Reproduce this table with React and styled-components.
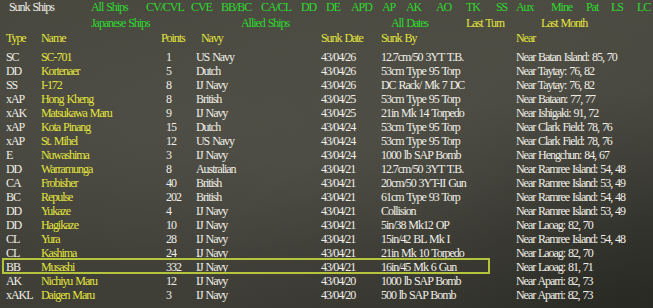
import React from "react";
import styled, { createGlobalStyle } from "styled-components";

const GlobalStyle = createGlobalStyle`
  html, body {
    margin: 0;
    padding: 0;
    background: #42423b;
  }
`;

const Screen = styled.div`
  width: 653px;
  height: 308px;
  overflow: hidden;
  position: relative;
  font-family: "Liberation Serif", "Times New Roman", serif;
  font-size: 12px;
  letter-spacing: -1.05px;
  word-spacing: 1px;
  line-height: 14px;
  color: #f0eee6;
  background:
    radial-gradient(ellipse at 30% 40%, rgba(95, 95, 85, 0.35), transparent 55%),
    radial-gradient(ellipse at 75% 20%, rgba(90, 90, 80, 0.3), transparent 50%),
    radial-gradient(ellipse at 60% 70%, rgba(85, 85, 75, 0.25), transparent 45%),
    radial-gradient(ellipse at 100% 100%, rgba(20, 20, 16, 0.5), transparent 50%),
    linear-gradient(180deg, #48483f 0%, #44443d 60%, #3e3e37 100%);
`;

const FilterRow = styled.div`
  display: flex;
  height: 14px;
  margin-top: ${(p) => p.$top || 0}px;
  white-space: nowrap;
`;

const FilterItem = styled.span`
  flex: 0 0 ${(p) => p.$w}px;
  color: ${(p) => (p.$tone === "yellow" ? "#e4e43c" : p.$tone === "white" ? "#f0eee6" : "#2fd82f")};
`;

const Table = styled.div`
  margin-top: 1px;
  padding-left: 6px;
`;

const Row = styled.div`
  display: grid;
  grid-template-columns: 35px 120px 35px 125px 60px 135px 1fr;
  height: 14px;
  position: relative;
  white-space: nowrap;
  margin-bottom: ${(p) => p.$gap || 0}px;

  ${(p) =>
    p.$selected &&
    `
    &::after {
      content: "";
      position: absolute;
      left: -4px;
      top: -2px;
      width: 484px;
      height: 12px;
      border: 2px solid #b4c43c;
    }
  `}
`;

const Cell = styled.span`
  padding-left: ${(p) => p.$shift || 0}px;
  color: ${(p) => (p.$yellow ? "#e4e43c" : "#f0eee6")};
`;

const topFilters = [
  ["Sunk Ships", 82, "white"],
  ["All Ships", 55],
  ["CV/CVL", 45],
  ["CVE", 30],
  ["BB/BC", 40],
  ["CA/CL", 40],
  ["DD", 25],
  ["DE", 25],
  ["APD", 31],
  ["AP", 24],
  ["AK", 30],
  ["AO", 30],
  ["TK", 30],
  ["SS", 20],
  ["Aux", 35],
  ["Mine", 35],
  ["Pat", 25],
  ["LS", 26],
  ["LC", 16],
];

const secondFilters = [
  ["", 91],
  ["Japanese Ships", 150],
  ["Allied Ships", 150],
  ["All Dates", 75],
  ["Last Turn", 75, "yellow"],
  ["Last Month", 80, "yellow"],
];

const ships = [
  ["SC", "SC-701", "1", "US Navy", "43/04/26", "12.7cm/50 3YT T.B.", "Near Batan Island: 85, 70"],
  ["DD", "Kortenaer", "5", "Dutch", "43/04/26", "53cm Type 95 Torp", "Near Taytay: 76, 82"],
  ["SS", "I-172", "8", "IJ Navy", "43/04/26", "DC Rack/ Mk 7 DC", "Near Taytay: 76, 82"],
  ["xAP", "Hong Kheng", "8", "British", "43/04/25", "53cm Type 95 Torp", "Near Bataan: 77, 77"],
  ["xAK", "Matsukawa Maru", "9", "IJ Navy", "43/04/25", "21in Mk 14 Torpedo", "Near Ishigaki: 91, 72"],
  ["xAP", "Kota Pinang", "15", "Dutch", "43/04/24", "53cm Type 95 Torp", "Near Clark Field: 78, 76"],
  ["xAP", "St. Mihel", "12", "US Navy", "43/04/24", "53cm Type 95 Torp", "Near Clark Field: 78, 76"],
  ["E", "Nuwashima", "3", "IJ Navy", "43/04/24", "1000 lb SAP Bomb", "Near Hengchun: 84, 67"],
  ["DD", "Warramunga", "8", "Australian", "43/04/21", "12.7cm/50 3YT T.B.", "Near Ramree Island: 54, 48"],
  ["CA", "Frobisher", "40", "British", "43/04/21", "20cm/50 3YT-II Gun", "Near Ramree Island: 53, 49"],
  ["BC", "Repulse", "202", "British", "43/04/21", "61cm Type 93 Torp", "Near Ramree Island: 54, 48"],
  ["DD", "Yukaze", "4", "IJ Navy", "43/04/21", "Collision", "Near Ramree Island: 53, 49"],
  ["DD", "Hagikaze", "10", "IJ Navy", "43/04/21", "5in/38 Mk12 OP", "Near Laoag: 82, 70"],
  ["CL", "Yura", "28", "IJ Navy", "43/04/21", "15in/42 BL Mk I", "Near Ramree Island: 54, 48"],
  ["CL", "Kashima", "24", "IJ Navy", "43/04/21", "21in Mk 10 Torpedo", "Near Laoag: 82, 70"],
  ["BB", "Musashi", "332", "IJ Navy", "43/04/21", "16in/45 Mk 6 Gun", "Near Laoag: 81, 71"],
  ["AK", "Nichiyu Maru", "12", "IJ Navy", "43/04/20", "1000 lb SAP Bomb", "Near Aparri: 82, 73"],
  ["xAKL", "Daigen Maru", "3", "IJ Navy", "43/04/20", "500 lb SAP Bomb", "Near Aparri: 82, 73"],
];

export default function App() {
  return (
    <>
      <GlobalStyle />
      <Screen>
        <FilterRow>
          <FilterItem $w={9} />
          {topFilters.map(([label, w, tone]) => (
            <FilterItem key={label} $w={w} $tone={tone}>
              {label}
            </FilterItem>
          ))}
        </FilterRow>
        <FilterRow $top={2}>
          {secondFilters.map(([label, w, tone], i) => (
            <FilterItem key={i} $w={w} $tone={tone}>
              {label}
            </FilterItem>
          ))}
        </FilterRow>
        <Table>
          <Row $gap={5}>
            <Cell $yellow>Type</Cell>
            <Cell $yellow>Name</Cell>
            <Cell $yellow>Points</Cell>
            <Cell $yellow $shift={5}>Navy</Cell>
            <Cell $yellow>Sunk Date</Cell>
            <Cell $yellow>Sunk By</Cell>
            <Cell $yellow>Near</Cell>
          </Row>
          {ships.map((s, i) => (
            <Row key={i} $selected={s[1] === "Musashi"}>
              <Cell>{s[0]}</Cell>
              <Cell $yellow>{s[1]}</Cell>
              <Cell $shift={5}>{s[2]}</Cell>
              <Cell>{s[3]}</Cell>
              <Cell>{s[4]}</Cell>
              <Cell>{s[5]}</Cell>
              <Cell>{s[6]}</Cell>
            </Row>
          ))}
        </Table>
      </Screen>
    </>
  );
}
